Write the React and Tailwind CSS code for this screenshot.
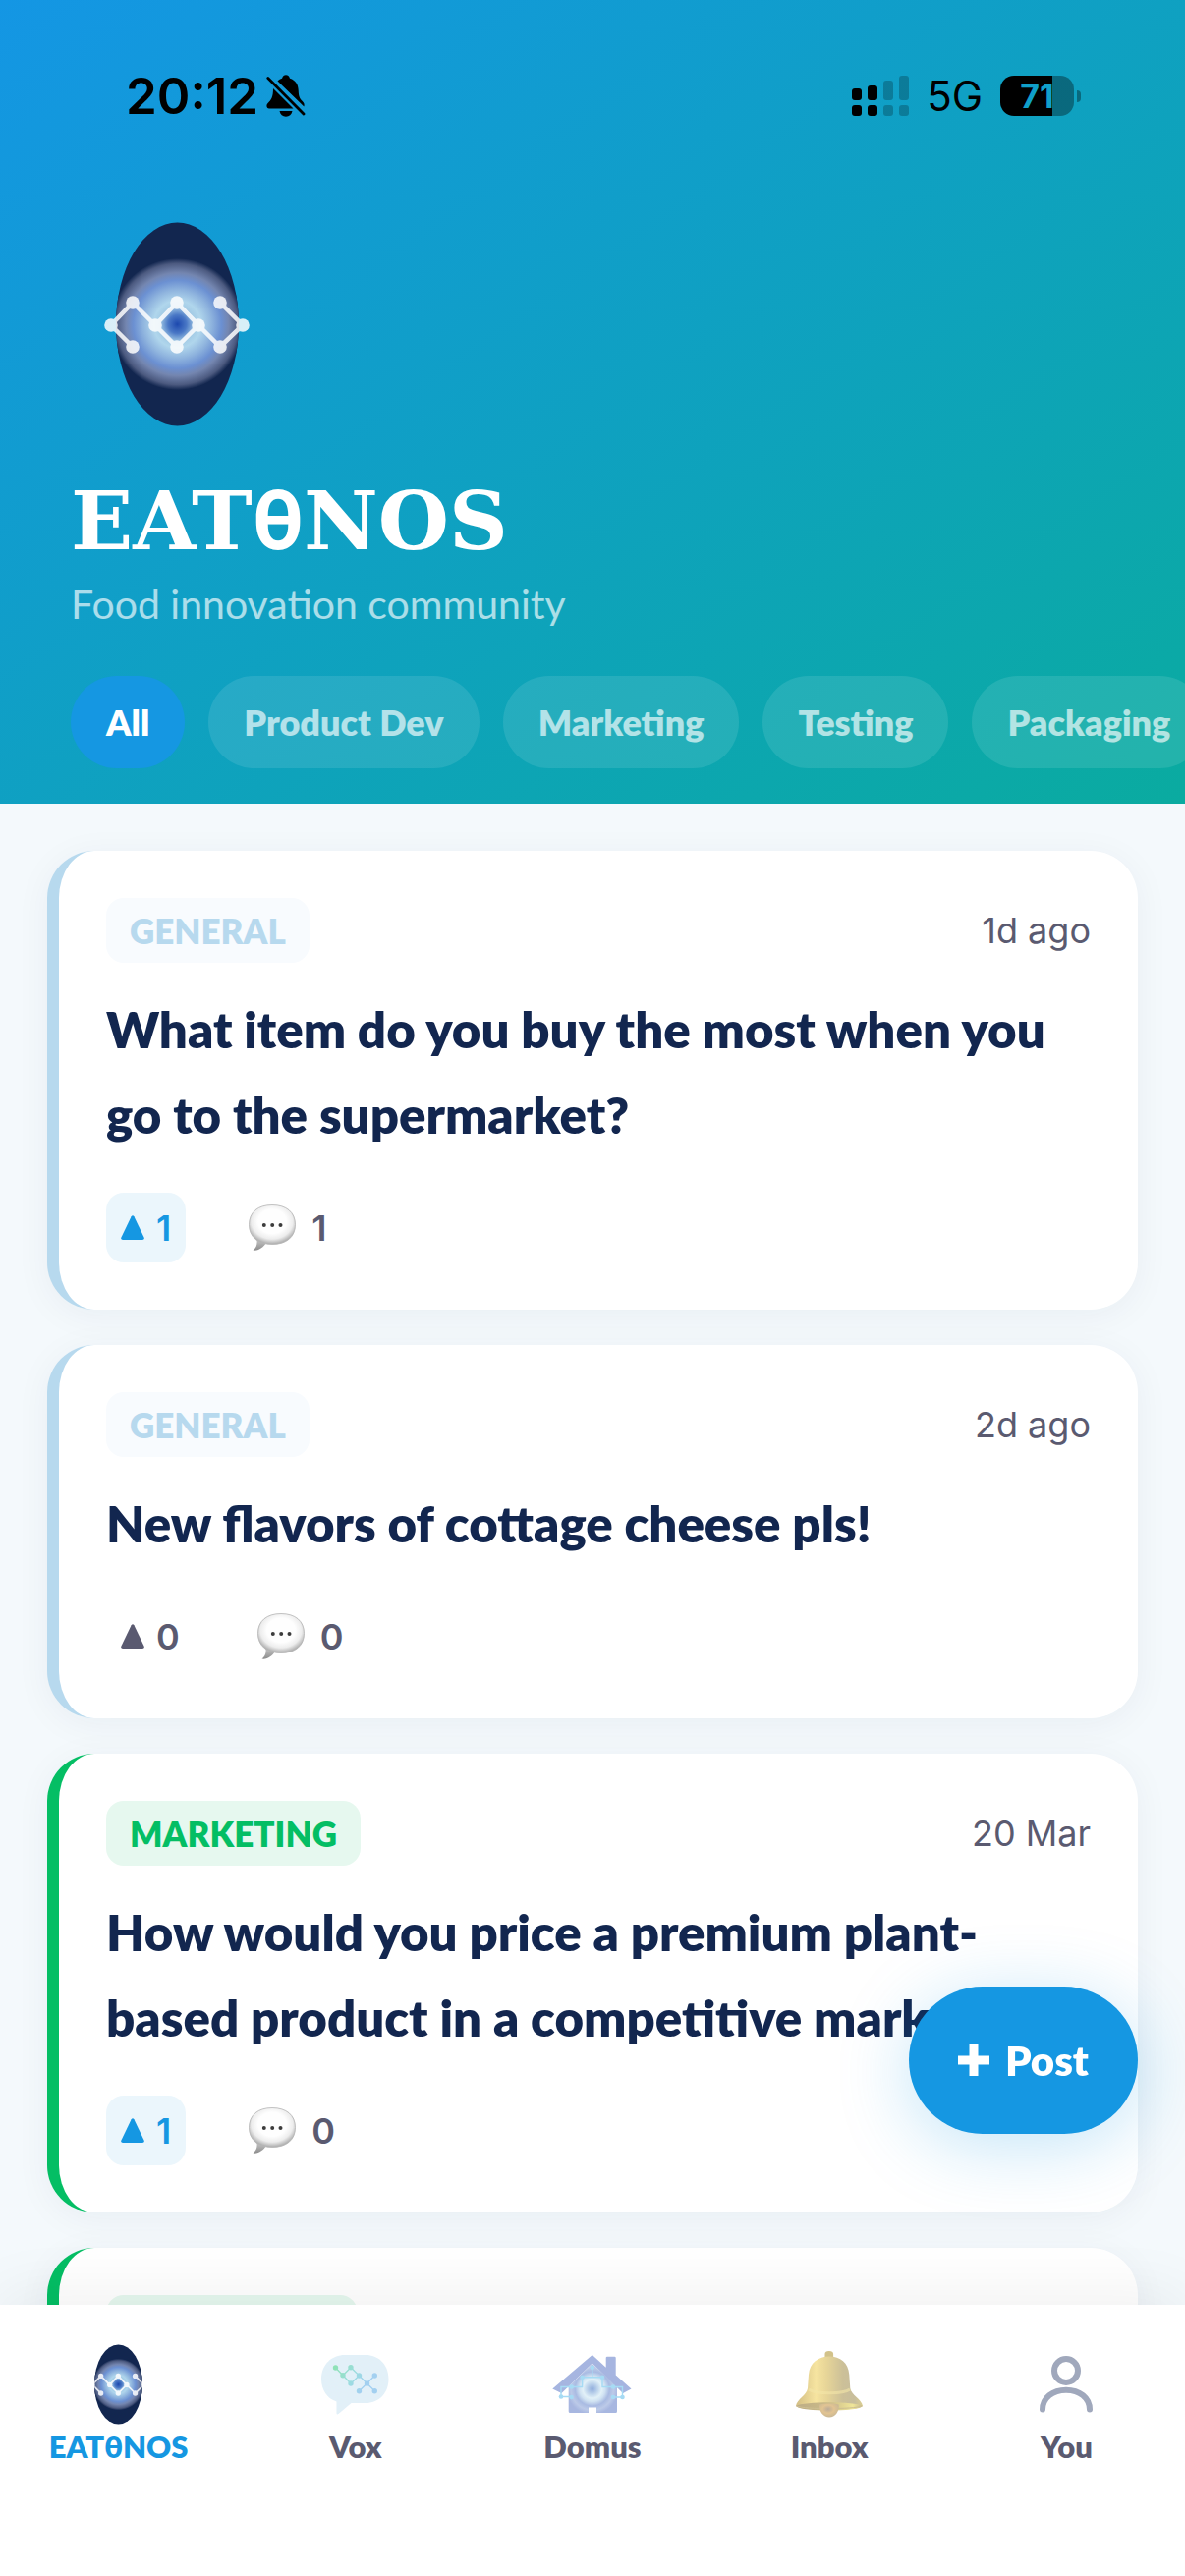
import React, { useState } from 'react';
import clsx from 'clsx';

const CATEGORIES = ['All', 'Product Dev', 'Marketing', 'Testing', 'Packaging'];

const STYLES = {
    general: { border: 'border-[#b7d9ee]', tag: 'bg-[#f8fbfe] text-[#b7d9ee]' },
    marketing: { border: 'border-[#04be64]', tag: 'bg-[#e6f8ef] text-[#04be64]' },
};

const POSTS = [
    { id: 1, category: 'general', time: '1d ago', title: 'What item do you buy the most when you go to the supermarket?', votes: 1, comments: 1, voted: true },
    { id: 2, category: 'general', time: '2d ago', title: 'New flavors of cottage cheese pls!', votes: 0, comments: 0, voted: false },
    { id: 3, category: 'marketing', time: '20 Mar', title: 'How would you price a premium plant-based product in a competitive market?', votes: 1, comments: 0, voted: true },
];

// molecule chain drawn over the egg
const NODES = [[53, 131], [75, 108], [75, 153], [98, 131], [120, 108], [142, 131], [120, 153], [164, 108], [164, 153], [187, 131]];

function Logo({ id, viewBox, className, clipped }) {
    return (
        <svg viewBox={viewBox} className={className} aria-hidden="true">
            <defs>
                <radialGradient id={`${id}-glow`} gradientUnits="userSpaceOnUse" cx="120.5" cy="130" r="67">
                    <stop offset="0" stopColor="#1c48ae" />
                    <stop offset="0.14" stopColor="#4a78c6" />
                    <stop offset="0.27" stopColor="#a4cce6" />
                    <stop offset="0.36" stopColor="#b0d6ec" />
                    <stop offset="0.52" stopColor="#8fb4de" />
                    <stop offset="0.67" stopColor="#6b90d2" />
                    <stop offset="0.78" stopColor="#7486b0" />
                    <stop offset="0.92" stopColor="#4c5a80" />
                    <stop offset="1" stopColor="#12264f" />
                </radialGradient>
                <clipPath id={`${id}-clip`}>
                    <ellipse cx="120.5" cy="130" rx="62.5" ry="103.5" />
                </clipPath>
            </defs>
            <ellipse cx="120.5" cy="130" rx="62.5" ry="103.5" fill="#12264f" />
            <circle cx="120.5" cy="130" r="67" fill={`url(#${id}-glow)`} clipPath={`url(#${id}-clip)`} />
            <g opacity="0.84" clipPath={clipped ? `url(#${id}-clip)` : undefined}>
                <path
                    d="M75 108 53 131 75 153M75 108 98 131 120 108 142 131 164 153 187 131 164 108M98 131 120 153 142 131"
                    fill="none"
                    stroke="#fff"
                    strokeWidth="4.5"
                />
                {NODES.map(([x, y]) => (
                    <circle key={`${x}-${y}`} cx={x} cy={y} r="6.8" fill="#fff" />
                ))}
            </g>
        </svg>
    );
}

function VoxIcon() {
    const dots = [[14.5, 13], [22, 20.7], [30, 12.7], [38.5, 21], [30, 29], [46.5, 29], [54.3, 21], [38.5, 36.7], [54.3, 36.7]];
    return (
        <svg viewBox="0 0 69 61" className="h-[61px] w-[69px]" aria-hidden="true">
            <defs>
                <linearGradient id="vox" gradientUnits="userSpaceOnUse" x1="14" y1="12" x2="54" y2="37">
                    <stop offset="0" stopColor="#8fe2b6" />
                    <stop offset="0.45" stopColor="#9cdce0" />
                    <stop offset="0.75" stopColor="#a3d0f0" />
                    <stop offset="1" stopColor="#a3d0f0" />
                </linearGradient>
            </defs>
            <path d="M24 0h21c13 0 23.500 9.500 23.500 24.500S58 49 45 49H30.500L17.500 60c-1 .8-2 .4-2-.8V47.500C6 44.500 0 35.500 0 24.500 0 9.500 11 0 24 0Z" fill="#e2f0f8" />
            <path
                d="M14.500 13 22 20.700 30 12.700 38.500 21 46.500 29 54.300 21M22 20.700 30 29 38.500 21M38.500 36.700 46.500 29 54.300 36.700"
                fill="none"
                stroke="url(#vox)"
                strokeWidth="1.3"
            />
            {dots.map(([x, y]) => (
                <circle key={`${x}-${y}`} cx={x} cy={y} r="2.700" fill="url(#vox)" />
            ))}
        </svg>
    );
}

function DomusIcon() {
    const dots = [[40.8, 12.7], [30.6, 22.7], [51, 22.7], [19.6, 32.5], [62, 32.5], [9, 42.5], [19.6, 43], [71.5, 43], [62, 43]];
    return (
        <svg viewBox="0 0 81 60" className="h-[60px] w-[81px]" aria-hidden="true">
            <defs>
                <radialGradient id="domus" gradientUnits="userSpaceOnUse" cx="40.8" cy="34.500" r="29">
                    <stop offset="0" stopColor="#90acdc" />
                    <stop offset="0.12" stopColor="#adc6e6" />
                    <stop offset="0.33" stopColor="#e2f1f8" />
                    <stop offset="0.45" stopColor="#d0e2f2" />
                    <stop offset="0.6" stopColor="#a9bbe2" />
                    <stop offset="0.75" stopColor="#bccae8" />
                    <stop offset="0.9" stopColor="#a8b7e0" />
                </radialGradient>
            </defs>
            <path d="M40.800 9 66 32v25.500q0 1.500-1.500 1.500H45v-5.500h-8V59H18.200q-1.500 0-1.500-1.500V32Z" fill="url(#domus)" />
            <path d="M40.800 0 54.700 12.800V3q0-1.300 1.300-1.300h7.500q1.200 0 1.200 1.300v17.500L80.500 34.500 72 39 40.800 8.500 9.500 39 .300 34.500Z" fill="#a6b5e0" />
            <g fill="none" stroke="#a6dbf4" strokeWidth="1.4">
                <path d="M40.800 12.700V22.700M30.600 22.700H51M30.600 22.700V32.500H9V42.500H19.600M51 22.700V32.500H71.500V43H62" />
            </g>
            {dots.map(([x, y]) => (
                <circle key={`${x}-${y}`} cx={x} cy={y} r="2.300" fill="#a6dbf4" />
            ))}
        </svg>
    );
}

function BellIcon() {
    return (
        <svg viewBox="0 0 68 68" className="size-[68px]" aria-hidden="true">
            <defs>
                <linearGradient id="bell-body" x1="0" x2="1">
                    <stop offset="0" stopColor="#d2be84" />
                    <stop offset="0.3" stopColor="#f6e4a0" />
                    <stop offset="0.45" stopColor="#e8d698" />
                    <stop offset="0.7" stopColor="#ccc098" />
                    <stop offset="0.88" stopColor="#c8be9c" />
                    <stop offset="1" stopColor="#dccf92" />
                </linearGradient>
                <linearGradient id="bell-rim" x1="0" x2="1">
                    <stop offset="0" stopColor="#bcac86" />
                    <stop offset="0.5" stopColor="#ccbc88" />
                    <stop offset="0.85" stopColor="#f0e698" />
                    <stop offset="1" stopColor="#c8ba8e" />
                </linearGradient>
                <radialGradient id="bell-clapper" cx="0.45" cy="0.4" r="0.6">
                    <stop offset="0" stopColor="#bcac98" />
                    <stop offset="0.5" stopColor="#e2c492" />
                    <stop offset="1" stopColor="#cab894" />
                </radialGradient>
            </defs>
            <path d="M29.500 7V3q0-3 4.300-3t4.300 3v4Z" fill="#d2c28a" />
            <path d="M34 5.500C45 5.500 53.500 12 54.300 24L55.300 38C56.500 45 67 49 68 56 62 61.500 6 61.500 0 56 1 49 11 45 12 38L13 24C14 12 23 5.500 34 5.500Z" fill="url(#bell-body)" />
            <path d="M13 39C20 44 48 44 55 39" fill="none" stroke="#f4e6a8" strokeWidth="3" opacity="0.6" />
            <path d="M0 56C8 51 60 51 68 56 64 59.500 50 60.500 34 60.500S4 59.500 0 56Z" fill="url(#bell-rim)" />
            <path d="M1 56C9 59.500 59 59.500 67 56" fill="none" stroke="#cdbf92" strokeWidth="1" />
            <path d="M24 54.500C30 53.300 38 53.300 43.700 54.500 44.300 61.500 40 67.500 34 67.500S23.300 61.500 24 54.500Z" fill="url(#bell-clapper)" />
        </svg>
    );
}

function UserIcon() {
    return (
        <svg viewBox="0 0 54 58" className="h-[58px] w-[54px]" fill="none" stroke="#a0a8bc" strokeWidth="6" strokeLinecap="round" aria-hidden="true">
            <circle cx="27" cy="15" r="12" />
            <path d="M3 54.500C3 42.500 13.500 34.700 27 34.700S51 42.500 51 54.500" />
        </svg>
    );
}

function CommentIcon() {
    return (
        <svg viewBox="0 0 48 48" className="size-12" aria-hidden="true">
            <defs>
                <radialGradient id="bubble" cx="0.5" cy="0.42" r="0.56">
                    <stop offset="0.55" stopColor="#fefefe" />
                    <stop offset="0.8" stopColor="#ededed" />
                    <stop offset="1" stopColor="#b4b4b4" />
                </radialGradient>
                <linearGradient id="bubble-tail" x1="0" y1="0" x2="0" y2="1">
                    <stop offset="0" stopColor="#cfcfcf" />
                    <stop offset="1" stopColor="#8c8c8c" />
                </linearGradient>
            </defs>
            <path d="M8 34C9.500 40 8 44 4.500 46.500 10 47.500 15 43.500 18 39Z" fill="url(#bubble-tail)" />
            <path d="M24 .500C38.500.500 47.500 8 47.500 20.500S38.500 40.500 24 40.500.500 33 .500 20.500 9.500.500 24 .500Z" fill="url(#bubble)" stroke="#b4b4b4" strokeWidth="0.8" />
            <g fill="#3c3c3c">
                <circle cx="15.800" cy="21" r="2" />
                <circle cx="24.200" cy="21" r="2" />
                <circle cx="32.500" cy="21" r="2" />
            </g>
        </svg>
    );
}

function StatusBar() {
    return (
        <div className="flex h-[177px] items-center justify-between pt-[18px] pr-[106px] pl-32 font-[Inter,sans-serif] text-black">
            <div className="flex items-center gap-2">
                <span className="text-[51px] leading-none font-semibold">20:12</span>
                <svg viewBox="0 0 40 43" className="h-[43px] w-10" aria-hidden="true">
                    <path d="M11.500 6.500C13 5 14.300 4.200 16 3.700 17 1.200 18 .300 20 .300s3 .9 4 3.400c6 2 8.500 6.300 8.700 12.300.2 6 1.300 8.500 4 11 1.700 1.600 2.300 3.200 1.700 5.500Z" />
                    <path d="M7 14 27.500 34.500H3C.500 34.500-.400 31.500 1.200 29.500 5 25.500 7 23 7 14ZM13.500 37h13c-.8 3.700-3 5.700-6.500 5.700S14.300 40.700 13.500 37Z" />
                    <path d="M1.800 3.500 38 40" stroke="#000" strokeWidth="2.800" strokeLinecap="round" />
                </svg>
            </div>
            <div className="flex items-center gap-[18px]">
                <svg viewBox="0 0 58 42" className="h-[42px] w-[58px]" aria-hidden="true">
                    <g>
                        <rect x="0" y="13" width="10" height="12" rx="3" />
                        <rect x="16" y="10" width="10" height="15" rx="3" />
                        <rect x="0" y="30" width="10" height="11" rx="3" />
                        <rect x="16" y="30" width="10" height="11" rx="3" />
                    </g>
                    <g opacity="0.22">
                        <rect x="32" y="5" width="10" height="20" rx="3" />
                        <rect x="48" y="0" width="10" height="25" rx="3" />
                        <rect x="32" y="30" width="10" height="11" rx="3" />
                        <rect x="48" y="30" width="10" height="11" rx="3" />
                    </g>
                </svg>
                <span className="text-[42px] leading-none">5G</span>
                <div className="flex items-center gap-[3px]">
                    <div className="flex h-[41px] w-[75px] items-center justify-center overflow-hidden rounded-[14px] bg-linear-to-r from-black from-71% to-black/35 to-71%">
                        <span className="text-[34px] leading-none font-bold text-[#109fc9]">71</span>
                    </div>
                    <div className="h-3 w-1 rounded-r-full bg-black/35" />
                </div>
            </div>
        </div>
    );
}

function PostCard({ post }) {
    const style = STYLES[post.category];
    return (
        <article className={clsx('rounded-[48px] border-l-12 bg-white p-12 shadow-[0_6px_36px_rgba(18,38,79,0.05)]', style.border)}>
            <div className="flex items-center justify-between">
                <span className={clsx('rounded-[18px] px-6 text-[35px] leading-[66px] font-extrabold uppercase', style.tag)}>{post.category}</span>
                <span className="font-[Inter,sans-serif] text-4xl leading-none text-[#5a5a70]">{post.time}</span>
            </div>
            <h2 className="mt-6 text-[51px] leading-[87px] font-extrabold text-[#12264f]">{post.title}</h2>
            <div className="mt-9 flex items-center gap-12 font-[Inter,sans-serif] text-4xl leading-none font-semibold text-[#5a5a70]">
                <button
                    aria-label="Upvote"
                    className={clsx('flex h-[71px] items-center gap-3 rounded-[18px] px-[15px]', post.voted && 'bg-[#ebf6fc] text-[#1597e2]')}
                >
                    <svg viewBox="0 0 24 26" className="h-[26px] w-6" fill="currentColor" aria-hidden="true">
                        <path d="M10.600 1.200Q12-.600 13.400 1.200L23.600 22.500Q24.400 25 22 25H2Q-.400 25 .400 22.500Z" />
                    </svg>
                    {post.votes}
                </button>
                <button aria-label="Comments" className="flex h-[71px] items-center gap-4 px-4">
                    <CommentIcon />
                    {post.comments}
                </button>
            </div>
        </article>
    );
}

function PlaceholderCard() {
    return (
        <div className="rounded-[48px] border-l-12 border-[#04be64] bg-white p-12 shadow-[0_6px_36px_rgba(18,38,79,0.05)]">
            <div className="h-[66px] w-64 rounded-[18px] bg-[#e6f8ef]" />
        </div>
    );
}

const TABS = [
    { label: 'EATθNOS', icon: <Logo id="tab" viewBox="58 26 125 208" className="h-[82px] w-[49px]" clipped /> },
    { label: 'Vox', icon: <VoxIcon /> },
    { label: 'Domus', icon: <DomusIcon /> },
    { label: 'Inbox', icon: <BellIcon /> },
    { label: 'You', icon: <UserIcon /> },
];

function App() {
    const [category, setCategory] = useState('All');
    const [tab, setTab] = useState('EATθNOS');

    return (
        <div className="flex h-screen flex-col bg-[#f4f9fc] font-[Lato,sans-serif]">
            <header className="shrink-0 bg-[linear-gradient(145deg,#1496e4,#0aaba0)] pb-9">
                <StatusBar />
                <div className="px-[72px] pt-[45px]">
                    <Logo id="hero" viewBox="12 22 216 216" className="size-54" />
                    <h1 className="mt-11 font-['DejaVu_Serif',serif] text-[83px] leading-[96px] font-bold text-white">
                        EAT<span className="font-[Inter,sans-serif] leading-none">θ</span>NOS
                    </h1>
                    <p className="mt-2 text-[41px] leading-[58px] text-white/65">Food innovation community</p>
                </div>
                <div className="mt-11 flex gap-6 overflow-hidden pl-[72px]">
                    {CATEGORIES.map((c) => (
                        <button
                            key={c}
                            onClick={() => setCategory(c)}
                            className={clsx(
                                'h-[94px] shrink-0 rounded-full px-9 text-4xl font-extrabold',
                                c === category ? 'bg-[#1597e2] text-white' : 'bg-white/10 text-white/65'
                            )}
                        >
                            {c}
                        </button>
                    ))}
                </div>
            </header>

            <main className="flex min-h-0 flex-1 flex-col gap-9 overflow-y-auto px-12 pt-12 [scrollbar-width:none]">
                {POSTS.map((post) => (
                    <PostCard key={post.id} post={post} />
                ))}
                <PlaceholderCard />
            </main>

            <button className="fixed right-12 bottom-[450px] z-20 flex h-[150px] items-center gap-4 rounded-full bg-[#1597e2] px-[50px] text-[42px] font-extrabold text-white shadow-[0_12px_72px_rgba(21,151,226,0.25)]">
                <svg viewBox="0 0 32 32" className="size-8" fill="currentColor" aria-hidden="true">
                    <path d="M11.500 0h9v11.500H32v9H20.500V32h-9V20.500H0v-9h11.500Z" />
                </svg>
                Post
            </button>

            <nav className="relative z-10 grid shrink-0 grid-cols-5 bg-white pt-9 pb-[114px] shadow-[0_-12px_60px_rgba(0,0,0,0.06)]">
                {TABS.map(({ label, icon }) => (
                    <button
                        key={label}
                        onClick={() => setTab(label)}
                        className={clsx('flex flex-col items-center text-[31px] leading-9 font-extrabold', label === tab ? 'text-[#1597e2]' : 'text-[#5a5a70]')}
                    >
                        <span className="flex h-[90px] items-center">{icon}</span>
                        {label}
                    </button>
                ))}
            </nav>
        </div>
    );
}

export default App;
